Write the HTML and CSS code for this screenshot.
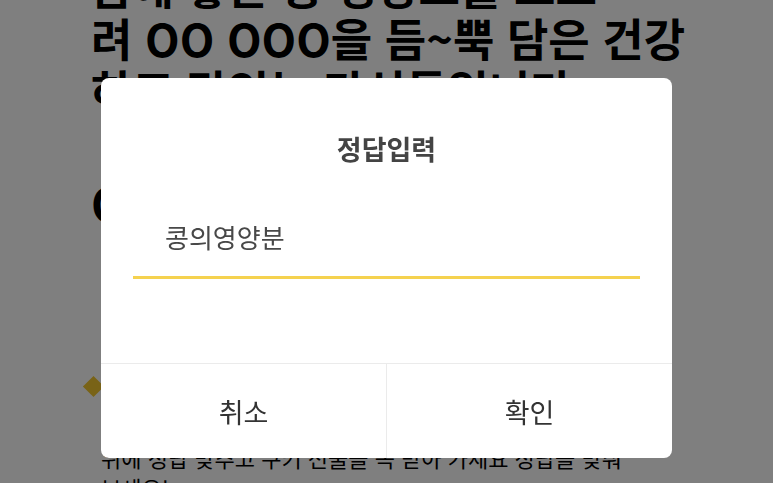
FILE: index.html
```html
<!DOCTYPE html>
<html lang="ko">
<head>
<meta charset="utf-8">
<title>정답입력</title>
<link rel="stylesheet" href="styles.css">
</head>
<body>
<main class="page">
  <h1 class="headline">몸에 좋은 콩 영양소를 모으<br>려 OO OOO을 듬~뿍 담은 건강<br>하고 맛있는 간식들입니다</h1>
  <h2 class="question">OX 퀴즈</h2>
  <section class="hint">
    <div class="hint-head"><span class="diamond"></span><span class="hint-title">정답 힌트</span></div>
    <p class="hint-text">위에 정답 맞추고 쿠키 선물을 꼭 받아 가세요 정답을 맞춰<br>보세요!</p>
  </section>
</main>

<div class="overlay">
  <div class="dialog">
    <div class="dialog-title">정답입력</div>
    <div class="dialog-field">
      <span class="field-value">콩의영양분</span>
    </div>
    <div class="dialog-spacer"></div>
    <div class="dialog-actions">
      <button class="action">취소</button>
      <button class="action action-right">확인</button>
    </div>
  </div>
</div>
</body>
</html>
```

FILE: styles.css
```css
* { box-sizing: border-box; }

html, body {
  margin: 0;
  padding: 0;
  height: 100%;
  overflow: hidden;
}

body {
  background: #ffffff;
  font-family: "Noto Sans CJK KR", "Noto Sans", sans-serif;
  color: #000;
}

.page {
  padding-left: 91px;
}

.headline {
  margin: -40px 0 0 0;
  font-size: 45px;
  line-height: 52px;
  font-weight: 700;
  white-space: nowrap;
}

.question {
  margin: 60px 0 0 0;
  font-size: 46px;
  line-height: 52px;
  font-weight: 700;
}

.hint {
  margin-top: 143px;
}

.hint-head {
  display: flex;
  align-items: center;
  gap: 14px;
  height: 30px;
  margin-left: -5px;
}

.diamond {
  width: 15px;
  height: 15px;
  background: #f2c62e;
  transform: rotate(45deg);
}

.hint-title {
  font-size: 24px;
  font-weight: 700;
}

.hint-text {
  margin: 41px 0 0 10px;
  font-size: 22px;
  line-height: 30px;
  white-space: nowrap;
}

.overlay {
  position: fixed;
  inset: 0;
  background: rgba(0, 0, 0, 0.5);
  display: flex;
  justify-content: center;
  align-items: flex-start;
  padding-top: 78px;
}

.dialog {
  width: 571px;
  height: 380px;
  background: #ffffff;
  border-radius: 8px;
  display: flex;
  flex-direction: column;
  overflow: hidden;
}

.dialog-title {
  margin-top: 55px;
  text-align: center;
  font-size: 27px;
  line-height: 31px;
  font-weight: 700;
  color: #444444;
}

.dialog-field {
  margin: 57px 32px 0 32px;
  padding: 0 0 24px 32px;
  border-bottom: 3px solid #f5d24f;
}

.field-value {
  display: block;
  font-size: 26px;
  line-height: 31px;
  color: #484848;
}

.dialog-spacer {
  flex: 1;
}

.dialog-actions {
  display: flex;
  height: 95px;
  border-top: 1px solid #ebebeb;
}

.action {
  flex: 1;
  border: 0;
  background: transparent;
  font-family: inherit;
  font-size: 27px;
  color: #333333;
  padding: 0;
  margin: 0;
}

.action-right {
  border-left: 1px solid #ebebeb;
}
```
